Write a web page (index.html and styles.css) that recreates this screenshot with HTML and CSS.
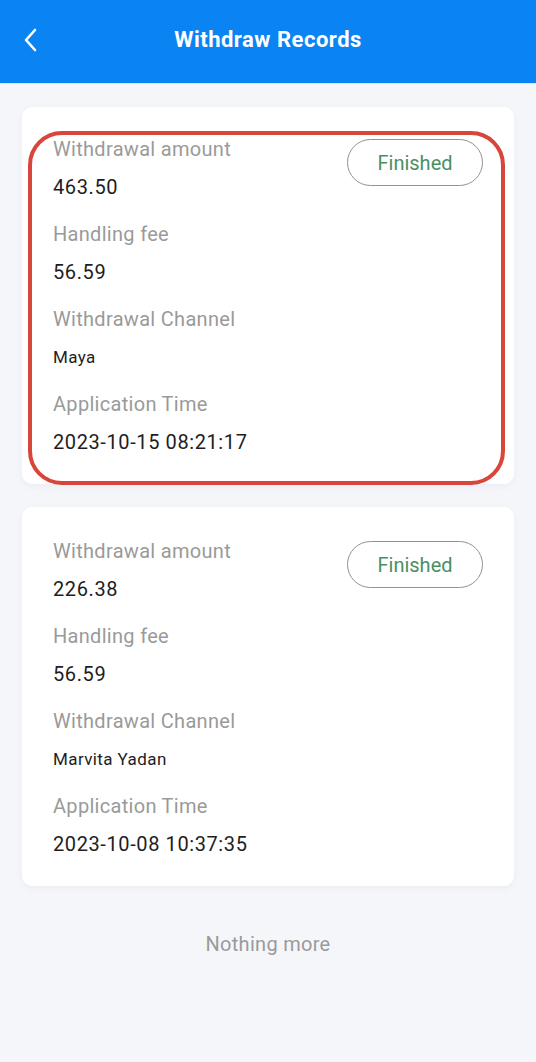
FILE: index.html
```html
<!doctype html>
<html lang="en">
<head>
    <meta charset="UTF-8">
    <title>Withdraw Records</title>
    <link rel="stylesheet" href="styles.css">
</head>
<body>
    <div class="header">
      <span class="back">
        <svg width="16" height="24" viewBox="0 0 16 24"><path d="M13 2 L4 12 L13 22" fill="none" stroke="#fff" stroke-width="2.6" stroke-linecap="round" stroke-linejoin="round"/></svg>
      </span>
      <h1 class="title">Withdraw Records</h1>
    </div>

    <div class="list">
      <div class="card">
        <div class="mark"></div>
        <div class="info">
          <div class="label">Withdrawal amount</div>
          <div class="value">463.50</div>
          <div class="label">Handling fee</div>
          <div class="value">56.59</div>
          <div class="label">Withdrawal Channel</div>
          <div class="value small">Maya</div>
          <div class="label">Application Time</div>
          <div class="value">2023-10-15 08:21:17</div>
        </div>
        <div class="status">Finished</div>
      </div>

      <div class="card">
        <div class="info">
          <div class="label">Withdrawal amount</div>
          <div class="value">226.38</div>
          <div class="label">Handling fee</div>
          <div class="value">56.59</div>
          <div class="label">Withdrawal Channel</div>
          <div class="value small">Marvita Yadan</div>
          <div class="label">Application Time</div>
          <div class="value">2023-10-08 10:37:35</div>
        </div>
        <div class="status">Finished</div>
      </div>

      <div class="more">Nothing more</div>
    </div>
</body>
</html>
```

FILE: styles.css
```css
body {
  margin: 0;
  background-color: #f5f6fa;
  font-family: Roboto, "Liberation Sans", sans-serif;
}
.header {
  display: flex;
  align-items: center;
  justify-content: center;
  position: relative;
  height: 83px;
  background-color: #0a83f3;
  border-bottom: 1px solid #d7e6f5;
}
.back {
  position: absolute;
  left: 22px;
  top: 28px;
  line-height: 0;
}
.title {
  margin: 0;
  margin-top: -4px;
  color: #fff;
  font-size: 22px;
  font-weight: bold;
  letter-spacing: 0.5px;
}
.list {
  padding: 23px 22px 0;
}
.card {
  position: relative;
  display: flex;
  justify-content: space-between;
  align-items: flex-start;
  background-color: #fff;
  border-radius: 10px;
  padding: 30px 31px 30px 31px;
  margin-bottom: 23px;
  box-shadow: 0 2px 6px rgba(180, 190, 210, 0.15);
}
.card + .card {
  padding-top: 32px;
}
.info {
  display: flex;
  flex-direction: column;
}
.label {
  color: #9a9a9a;
  font-size: 20px;
  letter-spacing: 0.3px;
  line-height: 24px;
  margin-bottom: 14px;
}
.value {
  color: #1e1e1e;
  font-size: 20px;
  letter-spacing: 0.6px;
  line-height: 24px;
  margin-bottom: 23px;
}
.value:last-child {
  margin-bottom: 0;
}
.value.small {
  font-size: 17px;
  letter-spacing: 0.4px;
}
.status {
  width: 134px;
  height: 45px;
  margin-top: 2px;
  border: 1.5px solid #8f9490;
  border-radius: 24px;
  color: #4a8f63;
  font-size: 20px;
  display: flex;
  align-items: center;
  justify-content: center;
}
.mark {
  position: absolute;
  left: 6px;
  right: 9px;
  top: 24px;
  bottom: -1px;
  border: 4px solid #d8453b;
  border-radius: 34px;
}
.more {
  text-align: center;
  color: #9a9a9a;
  font-size: 20px;
  letter-spacing: 0.3px;
  margin-top: 46px;
}
```
